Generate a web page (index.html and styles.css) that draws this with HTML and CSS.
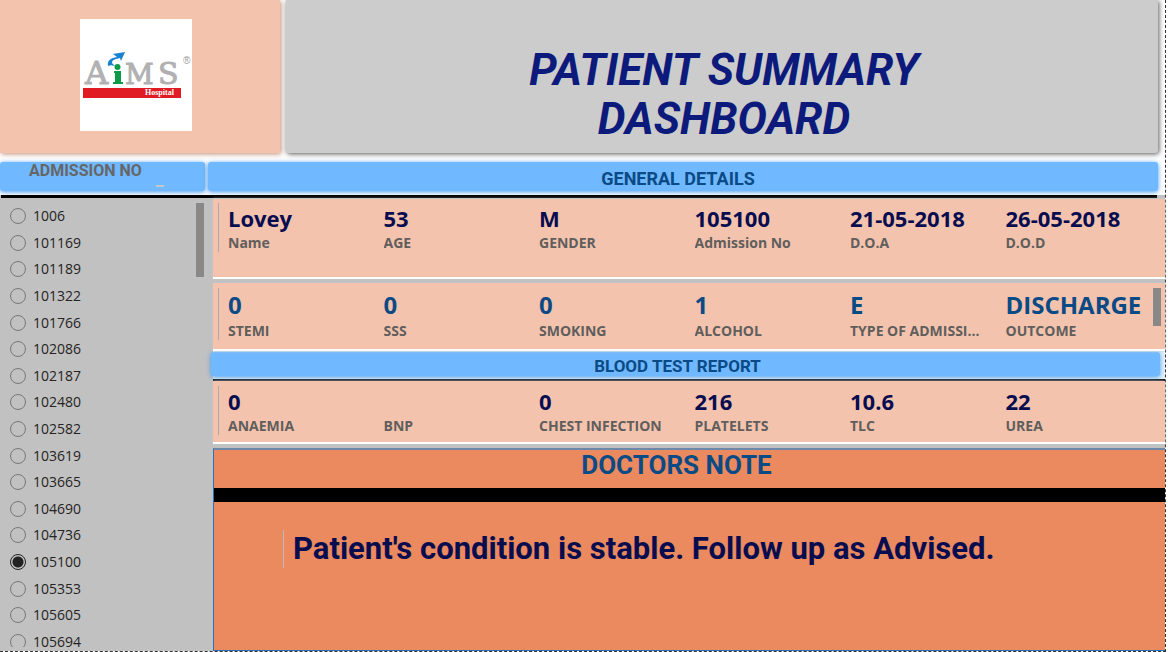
FILE: index.html
```html
<!DOCTYPE html>
<html lang="en">
<head>
<meta charset="utf-8">
<title>Patient Summary Dashboard</title>
<link rel="stylesheet" href="styles.css">
</head>
<body>
<div class="page">
  <header class="top">
    <div class="brand">
      <svg class="logo" viewBox="0 0 112 112" role="img" aria-label="AiMS Hospital">
        <rect width="112" height="112" fill="#fff"/>
        <g font-family="'DejaVu Serif', serif" fill="#b1b1b3" stroke="#b1b1b3" stroke-width="1">
          <text x="5" y="65" font-size="32">A</text>
          <text x="45" y="65" font-size="28">M</text>
          <text x="78" y="65" font-size="30">S</text>
        </g>
        <path d="M34 52h7v11h2v2H33v-2h2v-9h-1z" fill="#0d9a48"/>
        <circle cx="37.500" cy="48" r="3" fill="#0d9a48"/>
        <path d="M28 47c-1-6 3-8 9-9l-4-3 12-2-4 9-1-3c-5 1-8 2-8 5l3 3c-3-1-5-1-7 0z" fill="#1583cf"/>
        <rect x="3" y="69" width="98" height="10" fill="#e11b23"/>
        <text x="65" y="76" font-family="'Liberation Serif', serif" font-weight="bold" font-size="8" fill="#fff">Hospital</text>
        <text x="103" y="45" font-family="'Liberation Sans', sans-serif" font-size="10" fill="#999">®</text>
      </svg>
    </div>
    <h1 class="title">PATIENT SUMMARY<br>DASHBOARD</h1>
  </header>
  <div class="bars">
    <h2 class="bar bar-side" id="adm">ADMISSION NO<span class="bar-dash"></span></h2>
    <h2 class="bar bar-main">GENERAL DETAILS</h2>
  </div>
  <div class="content">
    <aside class="side">
      <ul class="list" role="radiogroup" aria-labelledby="adm">
        <li><label><input type="radio" name="adm">1006</label></li>
        <li><label><input type="radio" name="adm">101169</label></li>
        <li><label><input type="radio" name="adm">101189</label></li>
        <li><label><input type="radio" name="adm">101322</label></li>
        <li><label><input type="radio" name="adm">101766</label></li>
        <li><label><input type="radio" name="adm">102086</label></li>
        <li><label><input type="radio" name="adm">102187</label></li>
        <li><label><input type="radio" name="adm">102480</label></li>
        <li><label><input type="radio" name="adm">102582</label></li>
        <li><label><input type="radio" name="adm">103619</label></li>
        <li><label><input type="radio" name="adm">103665</label></li>
        <li><label><input type="radio" name="adm">104690</label></li>
        <li><label><input type="radio" name="adm">104736</label></li>
        <li><label><input type="radio" name="adm" checked>105100</label></li>
        <li><label><input type="radio" name="adm">105353</label></li>
        <li><label><input type="radio" name="adm">105605</label></li>
        <li><label><input type="radio" name="adm">105694</label></li>
      </ul>
      <span class="thumb thumb-side"></span>
    </aside>
    <main class="main">
      <section class="card card-general">
        <dl class="facts">
          <div><dt>Name</dt><dd>Lovey</dd></div>
          <div><dt>AGE</dt><dd>53</dd></div>
          <div><dt>GENDER</dt><dd>M</dd></div>
          <div><dt>Admission No</dt><dd>105100</dd></div>
          <div><dt>D.O.A</dt><dd>21-05-2018</dd></div>
          <div><dt>D.O.D</dt><dd>26-05-2018</dd></div>
        </dl>
      </section>
      <section class="card card-history">
        <dl class="facts facts-blue">
          <div><dt>STEMI</dt><dd>0</dd></div>
          <div><dt>SSS</dt><dd>0</dd></div>
          <div><dt>SMOKING</dt><dd>0</dd></div>
          <div><dt>ALCOHOL</dt><dd>1</dd></div>
          <div><dt>TYPE OF ADMISSION</dt><dd>E</dd></div>
          <div><dt>OUTCOME</dt><dd>DISCHARGE</dd></div>
        </dl>
        <span class="thumb thumb-card"></span>
      </section>
      <div class="blood-head"><h2 class="bar bar-blood">BLOOD TEST REPORT</h2></div>
      <section class="card card-blood">
        <dl class="facts">
          <div><dt>ANAEMIA</dt><dd>0</dd></div>
          <div><dt>BNP</dt><dd></dd></div>
          <div><dt>CHEST INFECTION</dt><dd>0</dd></div>
          <div><dt>PLATELETS</dt><dd>216</dd></div>
          <div><dt>TLC</dt><dd>10.6</dd></div>
          <div><dt>UREA</dt><dd>22</dd></div>
        </dl>
      </section>
      <section class="note">
        <h2 class="note-title">DOCTORS NOTE</h2>
        <p class="note-text">Patient's condition is stable. Follow up as Advised.</p>
      </section>
    </main>
  </div>
</div>
</body>
</html>
```
FILE: styles.css
```css
* { box-sizing: border-box; }
body {
  margin: 0;
  background: #fff;
  font-family: "Open Sans", "Noto Sans", sans-serif;
}
h1, h2, p, ul, dl, dd { margin: 0; }
.page {
  display: flex;
  flex-direction: column;
  min-height: 100vh;
  margin-right: 2px;
  border-right: 1px dashed #333;
  border-bottom: 1px dashed #333;
}

.top {
  display: grid;
  grid-template-columns: 280px 1fr;
  gap: 6px;
  padding-right: 7px;
}
.brand {
  display: flex;
  justify-content: center;
  padding: 19px 8px 22px 0;
  background: #f4c3ae;
  box-shadow: 1px 1px 5px #c08c76;
}
.logo { width: 112px; height: 112px; }
.title {
  padding-top: 46px;
  padding-left: 4px;
  background: #ccc;
  border-radius: 0 0 3px 3px;
  box-shadow: 1px 1px 5px #555;
  color: #0c1a7c;
  font: italic 700 44px/49px Roboto, sans-serif;
  text-align: center;
}

.bars {
  display: grid;
  grid-template-columns: 205px 1fr;
  gap: 3px;
  margin-top: 9px;
  padding: 0 7px 4px 0;
}
.bar {
  background: #70b8ff;
  border-radius: 3px;
  box-shadow: 0 1px 5px #4298e8;
  color: #0a4a85;
  font: 700 18px/33px Roboto, sans-serif;
  text-align: center;
}
.bar-main { height: 29px; padding-right: 10px; }
.bar-side {
  display: flex;
  gap: 14px;
  padding-left: 29px;
  color: #666;
  font-size: 16px;
  line-height: 18px;
}
.bar-dash {
  width: 8px;
  height: 2px;
  margin-top: 23px;
  background: #c4c8cc;
}

.content {
  display: grid;
  grid-template-columns: 208px 1fr;
  flex: 1;
  gap: 5px;
  background: #c1c1c1;
  position: relative;
  padding-top: 4px;
}
.content::before {
  content: "";
  position: absolute;
  top: 0;
  left: 1px;
  right: 8px;
  height: 3px;
  background: #000;
}
.side {
  position: relative;
  display: flex;
  margin-bottom: 4px;
  padding-top: 4px;
  overflow: hidden;
}
.list {
  display: grid;
  flex: 1;
  grid-auto-rows: 1fr;
  margin-bottom: -8px;
  padding: 0 0 0 10px;
  list-style: none;
}
.list label {
  display: flex;
  align-items: center;
  gap: 7px;
  height: 100%;
  color: #252423;
  font-size: 14px;
  line-height: 20px;
}
.list input {
  appearance: none;
  width: 16px;
  height: 16px;
  margin: 0;
  border: 1px solid #777;
  border-radius: 50%;
}
.list input:checked {
  border-color: #222;
  background: radial-gradient(circle, #222 5px, transparent 6px);
}
.thumb {
  position: absolute;
  width: 8px;
  background: #8a8886;
}
.thumb-side { top: 4px; right: 4px; height: 74px; }
.thumb-card { top: 5px; right: 4px; height: 38px; }

.main { display: flex; flex-direction: column; min-width: 0; }
.card {
  position: relative;
  padding-left: 5px;
  background: #f4c3ae;
  border-bottom: 2px solid #fff;
  box-shadow: 0 0 3px #c4c9cc;
}
.card-general { padding-top: 4px; padding-bottom: 25px; margin-bottom: 4px; }
.card-history { padding-top: 5px; padding-bottom: 9px; }
.card-blood { padding-top: 5px; padding-bottom: 7px; margin-bottom: 4px; }
.facts {
  display: grid;
  grid-template-columns: repeat(6, minmax(0, 1fr));
  padding: 0 4px 0 9px;
  border-left: 1px solid #aaa;
}
.facts div { display: flex; flex-direction: column-reverse; }
.facts dd {
  height: 30px;
  color: #080d50;
  font-size: 22px;
  font-weight: 700;
  line-height: 30px;
  white-space: nowrap;
}
.facts-blue dd { height: 33px; color: #0a4a85; font-size: 24px; line-height: 33px; }
.facts dt {
  overflow: hidden;
  margin-right: 18px;
  color: #605e5c;
  font-size: 14px;
  font-weight: 700;
  line-height: 19px;
  text-overflow: ellipsis;
  white-space: nowrap;
}
.blood-head {
  padding: 1px 5px 3px 0;
  background: #e4f1fc;
  border-bottom: 2px solid #000;
}
.bar-blood {
  height: 24px;
  margin-left: -2px;
  padding-right: 16px;
  font-size: 17px;
  line-height: 28px;
}

.note {
  display: flex;
  flex-direction: column;
  flex: 1;
  background: #eb895f;
  border: 1px solid #2a72b8;
  border-top: 2px solid #6d88a8;
  border-right: 0;
}
.note-title {
  padding: 0 26px 8px 0;
  border-bottom: 14px solid #000;
  color: #0a4a85;
  font: 700 26px/30px Roboto, sans-serif;
  text-align: center;
}
.note-text {
  margin: 28px 0 0 69px;
  padding-left: 9px;
  border-left: 1px solid #bbb;
  color: #080d50;
  font: 700 31px/38px Roboto, sans-serif;
}
```
